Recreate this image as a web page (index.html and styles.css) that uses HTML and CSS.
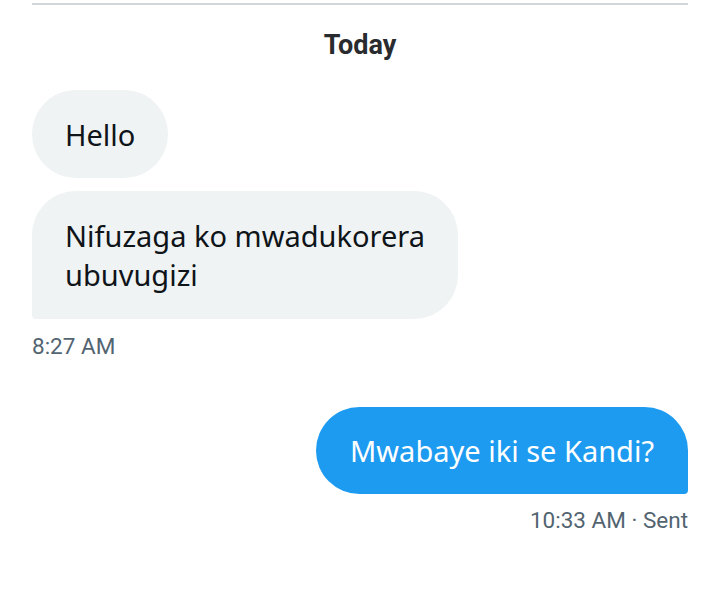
FILE: index.html
```html
<!DOCTYPE html>
<html>
<head>
<meta charset="utf-8">
<link rel="stylesheet" href="styles.css">
</head>
<body>
<div class="chat">
  <div class="divider"></div>
  <div class="day">Today</div>
  <div class="group received">
    <div class="bubble first">Hello</div>
    <div class="bubble last">Nifuzaga ko mwadukorera<br>ubuvugizi</div>
    <div class="meta">8:27 AM</div>
  </div>
  <div class="group sent">
    <div class="bubble">Mwabaye iki se Kandi?</div>
    <div class="meta">10:33 AM · Sent</div>
  </div>
</div>
</body>
</html>
```
FILE: styles.css
```css
html, body {
  margin: 0;
  padding: 0;
  background: #ffffff;
}
.chat {
  width: 703px;
  box-sizing: border-box;
  padding: 3px 15px 0 32px;
  display: flex;
  flex-direction: column;
  font-family: "Noto Sans", sans-serif;
}
.divider {
  height: 2px;
  background: #d3d6d8;
}
.day {
  text-align: center;
  font-family: Roboto, sans-serif;
  font-weight: 700;
  font-size: 27px;
  color: #292b2e;
  line-height: 28px;
  margin-top: 26px;
}
.group {
  display: flex;
  flex-direction: column;
  gap: 13px;
}
.received {
  align-items: flex-start;
  margin-top: 31px;
}
.sent {
  align-items: flex-end;
  margin-top: 48px;
}
.bubble {
  font-size: 29px;
  line-height: 39px;
  color: #0f1419;
  background: #eff3f4;
  border-radius: 44px;
  padding: 24.5px 33px;
}
.received .last {
  border-bottom-left-radius: 4px;
  padding: 25px 33px;
}
.sent .bubble {
  background: #1d9bf0;
  color: #ffffff;
  border-bottom-right-radius: 4px;
  padding: 24px 34px;
}
.meta {
  font-family: Roboto, sans-serif;
  font-size: 22.5px;
  color: #536471;
  line-height: 26px;
}
.received .meta {
  margin-top: 1px;
}
```
